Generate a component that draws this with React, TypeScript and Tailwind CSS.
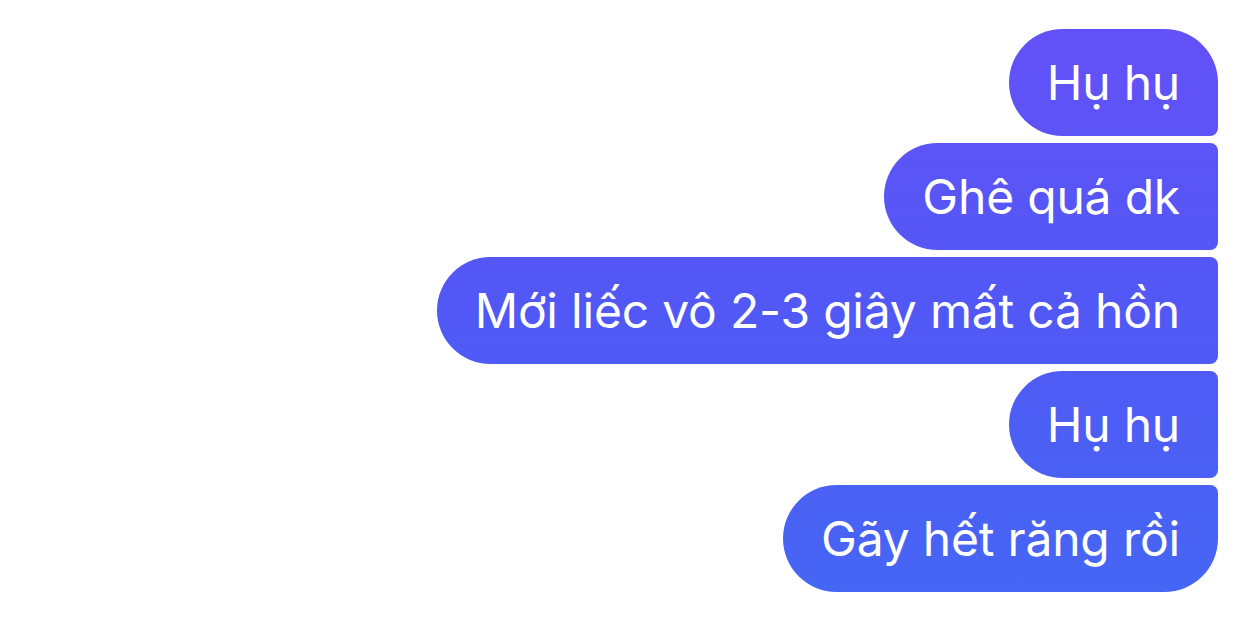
const messages = [
  { text: "Hụ hụ", shape: "rounded-l-[54px] rounded-tr-[54px] rounded-br-[8px]" },
  { text: "Ghê quá dk", shape: "rounded-l-[54px] rounded-r-[8px]" },
  { text: "Mới liếc vô 2-3 giây mất cả hồn", shape: "rounded-l-[54px] rounded-r-[8px]" },
  { text: "Hụ hụ", shape: "rounded-l-[54px] rounded-r-[8px]" },
  { text: "Gãy hết răng rồi", shape: "rounded-l-[54px] rounded-tr-[8px] rounded-br-[54px]" },
];

export default function App() {
  return (
    <div className="h-[617px] w-[1242px] overflow-hidden bg-white font-['Inter',sans-serif]">
      <div className="flex flex-col items-end gap-[7px] pt-[29px] pr-[24px]">
        {messages.map((message, i) => (
          <div
            key={i}
            className={`flex h-[107px] items-center bg-linear-to-b from-[#6450f7] via-[#5158f5] to-[#4467f4] bg-fixed px-[38px] text-[48px] tracking-[-0.2px] text-white ${message.shape}`}
          >
            {message.text}
          </div>
        ))}
      </div>
    </div>
  );
}
